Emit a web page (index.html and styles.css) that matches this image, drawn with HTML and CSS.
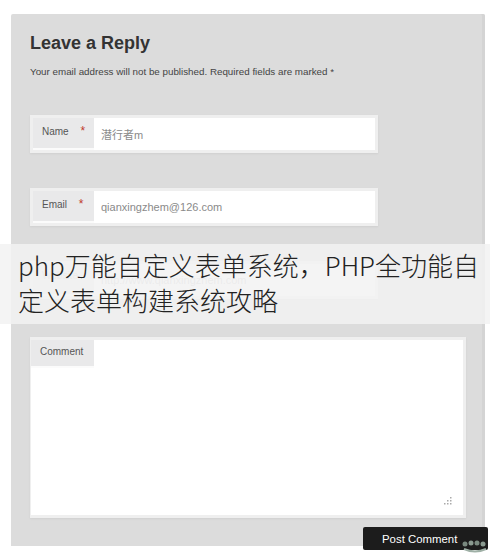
FILE: index.html
```html
<!DOCTYPE html>
<html lang="zh">

<head>
    <meta charset="UTF-8">
    <meta name="viewport" content="width=device-width, initial-scale=1.0">
    <title>Leave a Reply</title>
    <link rel="stylesheet" href="styles.css">
</head>

<body>
    <div class="reply-panel">
        <h1>Leave a Reply</h1>
        <p class="notes">Your email address will not be published. Required fields are marked *</p>

        <form class="reply-form">
            <div class="field">
                <label>Name <span class="req">*</span></label>
                <input type="text" value="潜行者m">
            </div>
            <div class="field">
                <label>Email <span class="req">*</span></label>
                <input type="text" value="qianxingzhem@126.com">
            </div>
            <div class="field field-faded">
                <label>Website</label>
                <input type="text" value="http://www.qianxingzhem.com">
            </div>
            <div class="field-comment">
                <textarea></textarea>
                <label>Comment</label>
                <svg class="grip" width="10" height="10" viewBox="0 0 10 10">
                    <rect x="7" y="1" width="1.5" height="1.5" fill="#aaa"/>
                    <rect x="7" y="4" width="1.5" height="1.5" fill="#aaa"/>
                    <rect x="4" y="4" width="1.5" height="1.5" fill="#aaa"/>
                    <rect x="7" y="7" width="1.5" height="1.5" fill="#aaa"/>
                    <rect x="4" y="7" width="1.5" height="1.5" fill="#aaa"/>
                    <rect x="1" y="7" width="1.5" height="1.5" fill="#aaa"/>
                </svg>
            </div>
            <div class="actions">
                <button type="button">Post Comment</button>
            </div>
        </form>
    </div>

    <div class="banner">php万能自定义表单系统，PHP全功能自定义表单构建系统攻略</div>

    <svg class="mark" width="28" height="16" viewBox="0 0 28 16">
        <circle cx="4" cy="6" r="2.5" fill="#7a8a80"/>
        <circle cx="10" cy="5" r="2.5" fill="#8a9a90"/>
        <circle cx="16" cy="5" r="2.5" fill="#7a8a80"/>
        <circle cx="22" cy="6" r="2.5" fill="#8a9a90"/>
        <path d="M3 11 Q14 16 25 11" stroke="#9fb0a6" stroke-width="2" fill="none"/>
    </svg>
</body>
</html>
```

FILE: styles.css
```css
body {
    font-family: "Liberation Sans", Arial, sans-serif;
    background-color: #fff;
    margin: 0;
    position: relative;
    height: 554px;
    overflow: hidden;
}

.reply-panel {
    background-color: #dcdcdc;
    margin: 14px 5px 0 11px;
    padding: 19px 0 0 19px;
    height: 513px;
    box-shadow: inset -3px 0 0 #d4d4d4;
    border-radius: 2px 2px 0 0;
}

.reply-panel h1 {
    margin: 0;
    font-size: 18px;
    line-height: 21px;
    color: #333;
}

.notes {
    margin: 12px 0 0;
    font-size: 9.8px;
    line-height: 12px;
    color: #444;
}

.reply-form {
    display: flex;
    flex-direction: column;
    gap: 35px;
    margin-top: 37px;
}

.field {
    display: flex;
    width: 342px;
    height: 32px;
    padding: 3px;
    background-color: #efefef;
    box-shadow: 0 1px 2px rgba(0, 0, 0, 0.06);
}

.field label,
.field-comment label {
    width: 52px;
    padding: 6px 0 0 9px;
    background-color: #e9e9ea;
    border-bottom: 2px solid #fbfbfb;
    font-size: 10px;
    color: #555;
}

.req {
    color: #c0392b;
    font-size: 12px;
    margin-left: 9px;
}

.field input {
    flex: 1;
    border: none;
    background: #fff;
    padding: 0 7px;
    margin: 0;
    font-family: "Liberation Sans", "Noto Sans CJK SC", sans-serif;
    font-size: 11px;
    color: #8a8a8a;
    outline: none;
}

.field-faded label,
.field-faded input {
    color: #bbb;
}

.field-comment {
    display: grid;
    width: 432px;
    height: 175px;
    padding: 3px 3px 3px 1px;
    margin-top: 3px;
    background-color: #efefef;
    box-shadow: 0 1px 2px rgba(0, 0, 0, 0.06);
}

.field-comment textarea,
.field-comment label,
.field-comment .grip {
    grid-area: 1 / 1;
}

.field-comment label {
    align-self: start;
    justify-self: start;
    height: 20px;
    width: 54px;
}

.field-comment textarea {
    border: none;
    resize: none;
    background: #fff;
    outline: none;
    margin: 0;
}

.grip {
    align-self: end;
    justify-self: end;
    margin: 0 10px 9px 0;
}

.actions {
    display: flex;
    justify-content: flex-end;
    margin: -26px -3px 0 0;
}

.actions button {
    background-color: #1c1c1c;
    color: #fff;
    border: none;
    border-radius: 2px;
    width: 125px;
    height: 23px;
    font-family: "Liberation Sans", Arial, sans-serif;
    font-size: 11.4px;
    text-align: left;
    padding: 0 0 0 19px;
}

.banner {
    position: absolute;
    left: 0;
    right: 0;
    top: 244px;
    height: 77px;
    padding: 3px 0 0 18px;
    background-color: rgba(242, 242, 242, 0.86);
    font-family: "Noto Sans CJK SC", sans-serif;
    font-weight: 300;
    font-size: 26px;
    line-height: 35px;
    color: #222;
}

.mark {
    position: absolute;
    right: 1px;
    bottom: 0;
}
```
